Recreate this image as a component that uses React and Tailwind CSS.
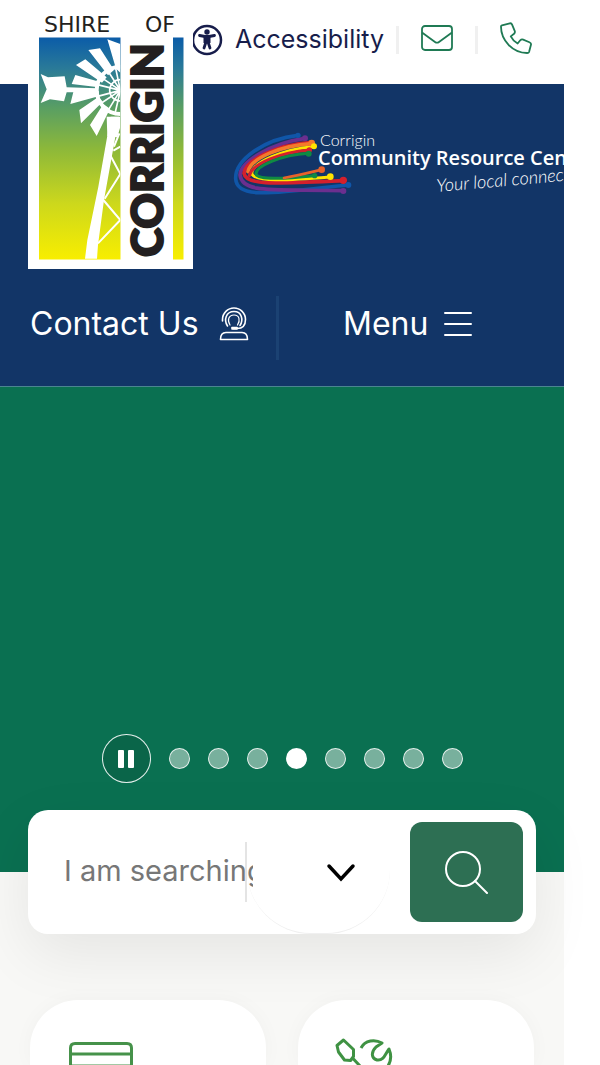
import React from "react";

function ShireLogo() {
  return (
    <svg viewBox="0 0 165 269" className="block w-[165px]" role="img" aria-label="Shire of Corrigin">
      <defs>
        <linearGradient id="sky" x1="0" y1="0" x2="0" y2="1">
          <stop offset="0" stopColor="#0b5ca8" />
          <stop offset="0.14" stopColor="#2a7a98" />
          <stop offset="0.32" stopColor="#5a9f62" />
          <stop offset="0.5" stopColor="#8cb83a" />
          <stop offset="0.75" stopColor="#cdd81c" />
          <stop offset="1" stopColor="#f8ee00" />
        </linearGradient>
        <clipPath id="panel">
          <rect x="58" y="112" width="243" height="668" />
        </clipPath>
      </defs>
      <rect width="165" height="269" fill="#fff" />
      <g fontFamily="'DejaVu Sans', sans-serif" fontSize="22" fill="#231f20">
        <text x="16" y="32">SHIRE</text>
        <text x="117" y="32">OF</text>
      </g>
      <rect x="11" y="37.500" width="81.500" height="222" fill="url(#sky)" />
      <rect x="145" y="37.500" width="10.500" height="222" fill="url(#sky)" />
      <g transform="translate(-8 0) scale(0.33333)" clipPath="url(#panel)" fill="#fff">
        <path d="M262 118 301 132V218L288 206ZM205 150 240 145 282 210 264 226ZM168 195 196 178 260 232 246 248ZM166 225 238 245 236 262 155 252ZM151 312 160 276 236 273 238 288ZM178 330 236 290 248 305 183 370ZM210 375 250 312 270 326 230 408ZM260 350H300V384L292 412 262 408Z" />
        <path d="M62 222 84 232 134 229 140 262 230 265V277L140 277 132 304 90 298 62 309 80 268Z" />
        <g fill="none" stroke="#fff">
          <path d="M301 200A71 71 0 0 0 301 342" strokeWidth="12" />
          <path d="M301 239A32 32 0 0 0 301 303" strokeWidth="5" />
          <path d="M301 271 232 254M301 271 240 230M301 271 262 210M301 271 286 200M301 271 230 290M301 271 240 312M301 271 262 335M301 271 284 345" strokeWidth="5" />
          <path d="M298 400 282 440M272 468 301 522 254 596M250 600 301 660 234 730M301 440 280 452" strokeWidth="6" />
        </g>
        <path d="M272 350 297 350 252 600 234 735 231 776H195L202 720 235 560Z" />
      </g>
      <text
        transform="translate(135 257) rotate(-90)"
        fontFamily="Lato, sans-serif"
        fontWeight="900"
        fontSize="44"
        fill="#231f20"
        stroke="#231f20"
        strokeWidth="2"
      >
        CORRIGIN
      </text>
    </svg>
  );
}

function ResourceCentreLogo() {
  return (
    <svg viewBox="0 0 400 80" className="block w-[400px] shrink-0" role="img" aria-label="Corrigin Community Resource Centre">
      <g transform="translate(-2 1) scale(0.33333)" fill="none" strokeLinecap="round" strokeWidth="11">
        <path d="M222 31C120 42 34 105 35 160C38 225 150 204 372 180" stroke="#1056a8" />
        <path d="M243 40C140 55 50 110 48 150C55 207 150 192 358 197" stroke="#6b2f8f" />
        <path d="M262 52C150 60 62 110 60 145C66 182 150 176 358 167" stroke="#d4202c" />
        <path d="M262 56C170 62 80 100 72 140" stroke="#f47a2a" />
        <path d="M268 65C180 72 86 112 83 145C90 172 190 166 318 156" stroke="#ffe400" strokeWidth="9" />
        <path d="M256 75C170 82 84 116 76 152" stroke="#d4202c" strokeWidth="9" />
        <path d="M254 85C170 90 94 124 96 148C104 166 190 160 272 152" stroke="#0f8a43" strokeWidth="9" />
        <path d="M180 159C220 152 260 142 293 134" stroke="#e8622a" strokeWidth="8" />
      </g>
      <g transform="translate(-2 1) scale(0.33333)">
        <circle cx="222" cy="31" r="8" fill="#1056a8" />
        <circle cx="243" cy="40" r="9" fill="#6b2f8f" />
        <circle cx="263" cy="54" r="10" fill="#f47a2a" />
        <circle cx="270" cy="64" r="9" fill="#ffe400" />
        <circle cx="256" cy="75" r="8" fill="#d4202c" />
        <circle cx="254" cy="86" r="9" fill="#0f8a43" />
        <circle cx="293" cy="134" r="10" fill="#e8622a" />
        <circle cx="272" cy="152" r="8" fill="#0f8a43" />
        <circle cx="319" cy="155" r="10" fill="#ffe400" />
        <circle cx="358" cy="166" r="11" fill="#d4202c" />
        <circle cx="373" cy="180" r="9" fill="#1056a8" />
        <circle cx="358" cy="198" r="9" fill="#6b2f8f" />
      </g>
      <g fill="#fff">
        <text x="94" y="22" fontFamily="Lato, sans-serif" fontSize="16" fontWeight="300">Corrigin</text>
        <text x="92" y="41" fontFamily="'Open Sans', sans-serif" fontSize="20" fontWeight="600">Community Resource Centre</text>
        <text
          transform="translate(211 68) rotate(-5)"
          fontFamily="Lato, sans-serif"
          fontStyle="italic"
          fontSize="18"
          fontWeight="300"
        >
          Your local connection
        </text>
      </g>
    </svg>
  );
}

function AccessIcon() {
  return (
    <svg viewBox="0 0 32 32" className="size-8 shrink-0" aria-hidden="true">
      <circle cx="16" cy="16" r="14" fill="none" stroke="#171d4b" strokeWidth="2.500" />
      <circle cx="16" cy="8" r="2.700" fill="#171d4b" />
      <path d="M8.500 11.500 14 12.500H18L23.500 11.500M13 24 15 18H17L19 24" fill="none" stroke="#171d4b" strokeWidth="2.800" strokeLinecap="round" />
      <path d="M12.500 12H19.500V19H12.500Z" fill="#171d4b" />
    </svg>
  );
}

function MailIcon() {
  return (
    <svg viewBox="0 0 32 26" className="w-8" fill="none" stroke="#1f7a54" strokeWidth="1.800" strokeLinejoin="round" aria-hidden="true">
      <rect x="1" y="1" width="30" height="24" rx="3" />
      <path d="M1 7.500 14 17Q16 18.400 18 17L31 7.500" />
    </svg>
  );
}

function PhoneIcon() {
  return (
    <svg viewBox="0 0 98 98" className="size-8" fill="none" stroke="#1f7a54" strokeWidth="5.500" strokeLinejoin="round" aria-hidden="true">
      <path d="M6 10 30 4Q35 3 37 8L45 27Q47 32 43 36L33 44Q40 58 54 66L62 56Q66 52 71 54L90 62Q96 65 95 69L89 92Q88 95 83 95C40 94 3 58 3 14Q3 11 6 10Z" />
    </svg>
  );
}

function AgentIcon() {
  return (
    <svg viewBox="0 0 30 34" className="w-[30px]" fill="none" stroke="#fff" strokeWidth="1.600" strokeLinecap="round" strokeLinejoin="round" aria-hidden="true">
      <path d="M3.500 14V12.500A11.500 11.500 0 0 1 26.500 12.500C26.500 18 24 21.500 18 21.500H14" />
      <path d="M8.500 19C4.500 13 7 4.500 15 4.500S24.500 13 21 18.500" />
      <path d="M11 18C8 13.500 9.500 8 15 8S21.500 13.500 18.500 18" strokeWidth="1.200" />
      <path d="M13 20.500H18V22H13Z" fill="#fff" />
      <path d="M1.500 32.500C1.500 28 3 25.500 7 25.500H23C27 25.500 28.500 28 28.500 32.500Z" />
    </svg>
  );
}

const slides = [1, 2, 3, 4, 5, 6, 7, 8];
const activeSlide = 4;

export default function App() {
  return (
    <div className="flex min-h-screen flex-col overflow-hidden bg-white pr-9 font-[Inter,sans-serif]">
      <header className="relative">
        <a href="#home" className="absolute top-0 left-7 z-10">
          <ShireLogo />
        </a>
        <div className="flex h-[84px] items-center justify-end pr-8 pb-1 text-[#171d4b]">
          <a href="#accessibility" className="flex items-center gap-3 text-[25px]">
            <AccessIcon />
            Accessibility
          </a>
          <span className="mr-[22px] ml-3 h-7 w-[3px] bg-[#f0f0f0]" />
          <a href="#email" aria-label="Email" className="pb-1">
            <MailIcon />
          </a>
          <span className="mx-[22px] h-7 w-[3px] bg-[#f0f0f0]" />
          <a href="#phone" aria-label="Phone" className="pb-1">
            <PhoneIcon />
          </a>
        </div>
        <div className="border-b border-[#4b8590] bg-[#123567] text-white">
          <div className="flex h-[212px] overflow-hidden pt-10 pl-[226px]">
            <a href="#resource-centre" className="shrink-0">
              <ResourceCentreLogo />
            </a>
          </div>
          <nav className="flex items-stretch pb-[26px] text-[32px] leading-10">
            <a href="#contact" className="flex h-16 w-[279px] items-center gap-5 border-r-[3px] border-[#1b4273] pb-2 pl-[30px] whitespace-nowrap">
              Contact Us
              <AgentIcon />
            </a>
            <button type="button" className="flex h-16 flex-1 items-center gap-4 pb-2 pl-16">
              Menu
              <svg viewBox="0 0 28 24" className="w-7" stroke="#fff" strokeWidth="2" strokeLinecap="round" aria-hidden="true">
                <path d="M1 1H27M1 12H27M1 23H27" />
              </svg>
            </button>
          </nav>
        </div>
      </header>

      <section className="flex min-h-[485px] flex-col items-center justify-end bg-[#0a7051] pb-[89px]">
        <div className="flex items-center gap-[18px]">
          <button
            type="button"
            aria-label="Pause slideshow"
            className="flex size-[49px] items-center justify-center gap-1 rounded-full border border-white/90 bg-[#0a6549]"
          >
            <span className="h-[18px] w-1.5 rounded-[1px] bg-white" />
            <span className="h-[18px] w-1.5 rounded-[1px] bg-white" />
          </button>
          {slides.map((n) => (
            <button
              key={n}
              type="button"
              aria-label={`Slide ${n}`}
              className={
                n === activeSlide
                  ? "size-[21px] rounded-full bg-white"
                  : "size-[21px] rounded-full border border-white/80 bg-[#78b09d]"
              }
            />
          ))}
        </div>
      </section>

      <main className="flex flex-1 flex-col bg-[#f8f8f6] px-7">
        <form className="-mt-[62px] flex h-[124px] items-center rounded-[20px] bg-white pr-[13px] pl-9 shadow-[0_20px_60px_rgba(0,0,0,0.08)]">
          <input
            type="text"
            aria-label="Search"
            placeholder="I am searching for"
            className="h-16 w-0 flex-1 bg-transparent pb-1 text-[29px] text-[#777] outline-none placeholder:text-[#777]"
          />
          <div className="relative -ml-2 flex h-full w-[145px] items-center">
            <span className="h-[60px] w-0.5 bg-[#e4e4e4]" />
            <select
              aria-label="Category"
              className="h-full flex-1 appearance-none rounded-b-[64px] border-b border-[#f0f0f0] bg-transparent outline-none"
            >
              <option value="" />
            </select>
            <svg
              viewBox="0 0 30 20"
              className="pointer-events-none absolute top-[53px] right-[34px] w-[30px]"
              fill="none"
              stroke="#000"
              strokeWidth="3.500"
              strokeLinecap="round"
              aria-hidden="true"
            >
              <path d="M3 3 15 16 27 3" />
            </svg>
          </div>
          <button
            type="submit"
            aria-label="Submit search"
            className="ml-5 flex h-[100px] w-[113px] shrink-0 items-center justify-center rounded-xl bg-[#2d6f53]"
          >
            <svg viewBox="0 0 44 44" className="size-11" fill="none" stroke="#fff" strokeWidth="2" strokeLinecap="round" aria-hidden="true">
              <circle cx="18" cy="19" r="17" />
              <path d="M30 31 42 43" />
            </svg>
          </button>
        </form>

        <div className="mt-[66px] grid flex-1 grid-cols-2 gap-8 px-0.5">
          <a href="#payments" aria-label="Payments" className="rounded-t-[48px] bg-white pt-[42px] pl-[39px] shadow-[0_0_20px_rgba(0,0,0,0.03)]">
            <svg viewBox="0 0 64 23" className="block w-16" fill="none" stroke="#46924a" strokeWidth="3" aria-hidden="true">
              <path d="M1.500 23V6Q1.500 1.500 6 1.500H58Q62.500 1.500 62.500 6V23M1.500 12H62.500M1.500 24H62.500" />
            </svg>
          </a>
          <a href="#works" aria-label="Works" className="rounded-t-[48px] bg-white pt-[38px] pl-[37px] shadow-[0_0_20px_rgba(0,0,0,0.03)]">
            <svg viewBox="0 0 60 27" className="block w-[60px]" fill="none" stroke="#3f9243" strokeWidth="3" strokeLinejoin="round" aria-hidden="true">
              <path d="M2 7.500 8.500 2 18.500 11.500V18.500L15.500 22.500 9.500 22 3.500 14ZM18 20.500 25 28" />
              <path d="M26 10C30 2 40 1 47 5L41 9C36 14 36 20 42 22C49 23 50 16 54 11C57 18 56 23 53 28" />
            </svg>
          </a>
        </div>
      </main>
    </div>
  );
}
